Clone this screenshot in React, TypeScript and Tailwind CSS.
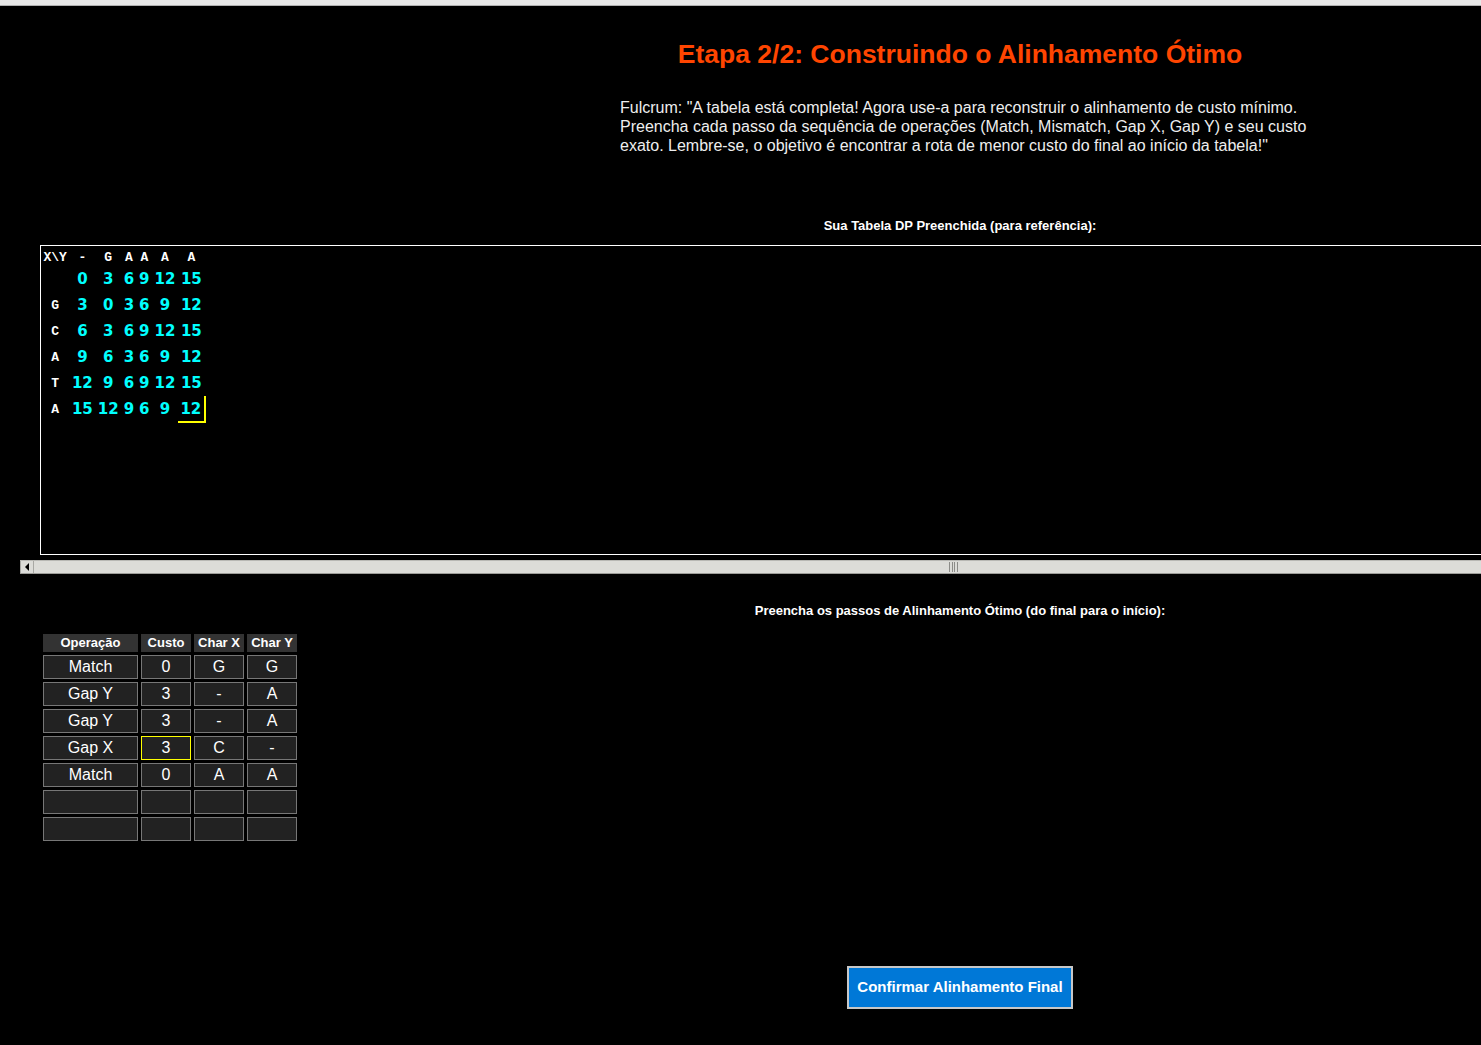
import React from "react";

const header = ["-", "G", "A", "A", "A", "A"];
const labels = ["", "G", "C", "A", "T", "A"];
const values = [
  [0, 3, 6, 9, 12, 15],
  [3, 0, 3, 6, 9, 12],
  [6, 3, 6, 9, 12, 15],
  [9, 6, 3, 6, 9, 12],
  [12, 9, 6, 9, 12, 15],
  [15, 12, 9, 6, 9, 12],
];

const steps: string[][] = [
  ["Match", "0", "G", "G"],
  ["Gap Y", "3", "-", "A"],
  ["Gap Y", "3", "-", "A"],
  ["Gap X", "3", "C", "-"],
  ["Match", "0", "A", "A"],
  ["", "", "", ""],
  ["", "", "", ""],
];

export default function App() {
  return (
    <div className="w-[1481px] h-[1045px] overflow-hidden bg-black font-['Liberation_Sans',Arial,sans-serif] text-white">
      <div className="h-[5px] box-content bg-[#e8e8e8] border-b border-[#b0b0b0]" />
      <div className="w-[1920px] flex flex-col">
        <h1 className="mt-[34px] text-center text-[26.5px] font-bold leading-[28px] text-[#ff4500]">
          Etapa 2/2: Construindo o Alinhamento Ótimo
        </h1>
        <p className="mt-[30px] w-[690px] ml-[620px] text-[16px] leading-[19px] text-[#eeeeee]">
          Fulcrum: "A tabela está completa! Agora use-a para reconstruir o alinhamento de custo mínimo.
          Preencha cada passo da sequência de operações (Match, Mismatch, Gap X, Gap Y) e seu custo
          exato. Lembre-se, o objetivo é encontrar a rota de menor custo do final ao início da tabela!"
        </p>
        <h3 className="mt-[63px] text-center text-[13px] font-bold leading-[15px] text-white">
          Sua Tabela DP Preenchida (para referência):
        </h3>
        <div className="mt-[12px] ml-[20px] w-[1880px]">
          <div className="ml-[20px] h-[310px] w-[1860px] border border-white pt-[1px]">
            <table className="border-collapse">
              <tbody>
                <tr className="h-[19px]">
                  <th className="px-[2.5px] p-0 pt-[2px] font-['Liberation_Mono',monospace] text-[13px] font-bold leading-[15px] text-white text-center">
                    X\Y
                  </th>
                  {header.map((h, i) => (
                    <th
                      key={i}
                      className="px-[2.5px] p-0 pt-[2px] font-['Liberation_Mono',monospace] text-[13px] font-bold leading-[15px] text-white text-center"
                    >
                      {h}
                    </th>
                  ))}
                </tr>
                {values.map((row, r) => (
                  <tr key={r} className="h-[26px]">
                    <th className="px-[2.5px] p-0 font-['Liberation_Mono',monospace] text-[13px] font-bold leading-[15px] text-white text-center">
                      {labels[r]}
                    </th>
                    {row.map((v, c) => {
                      const hl = r === 5 && c === 5;
                      return (
                        <td
                          key={c}
                          className={
                            hl
                              ? "px-[2.5px] p-0 text-center font-['DejaVu_Sans',sans-serif] text-[15px] font-bold leading-[18px] text-[#00ffff] border-r-2 border-b-2 border-[#ffff00]"
                              : "px-[2.5px] p-0 text-center font-['DejaVu_Sans',sans-serif] text-[15px] font-bold leading-[18px] text-[#00ffff]"
                          }
                        >
                          {v}
                        </td>
                      );
                    })}
                  </tr>
                ))}
              </tbody>
            </table>
          </div>
          <div className="mt-[5px] h-[14px] w-[1880px] flex bg-[#dcdcd8] border-t border-b border-t-[#b8b8b4] border-b-[#9c9c98]">
            <div className="w-[14px] h-full flex items-center justify-center border-l border-r border-[#a8a8a4] bg-[#dcdcd8]">
              <svg width="5" height="8" viewBox="0 0 5 8">
                <path d="M4 0 L0 4 L4 8 Z" fill="#000" />
              </svg>
            </div>
            <div className="w-[915px]" />
            <div className="flex gap-[1.5px] pt-[1px] pb-[1px]">
              <div className="w-px h-full bg-[#8c8c88]" />
              <div className="w-px h-full bg-[#8c8c88]" />
              <div className="w-px h-full bg-[#8c8c88]" />
              <div className="w-px h-full bg-[#8c8c88]" />
            </div>
          </div>
        </div>
        <h3 className="mt-[29px] text-center text-[13px] font-bold leading-[15px] text-white">
          Preencha os passos de Alinhamento Ótimo (do final para o início):
        </h3>
        <div className="mt-[16px] ml-[43px] grid grid-cols-[95px_50px_50px_50px] gap-[3px]">
          {["Operação", "Custo", "Char X", "Char Y"].map((h) => (
            <div
              key={h}
              className="h-[18px] bg-[#333333] text-[13px] font-bold leading-[18px] text-white text-center"
            >
              {h}
            </div>
          ))}
          {steps.map((row, r) =>
            row.map((v, c) => {
              const hl = r === 3 && c === 1;
              return (
                <div
                  key={`${r}-${c}`}
                  className={
                    hl
                      ? "h-[24px] bg-[#222222] border border-[#ffff00] text-[16px] leading-[22px] text-white text-center"
                      : "h-[24px] bg-[#222222] border border-[#777777] text-[16px] leading-[22px] text-white text-center"
                  }
                >
                  {v}
                </div>
              );
            })
          )}
        </div>
        <div className="mt-[125px] flex justify-center">
          <button className="h-[43px] px-[8px] bg-[#0078d7] border-2 border-[#c8c8c8] text-[15px] font-bold text-white">
            Confirmar Alinhamento Final
          </button>
        </div>
      </div>
    </div>
  );
}
